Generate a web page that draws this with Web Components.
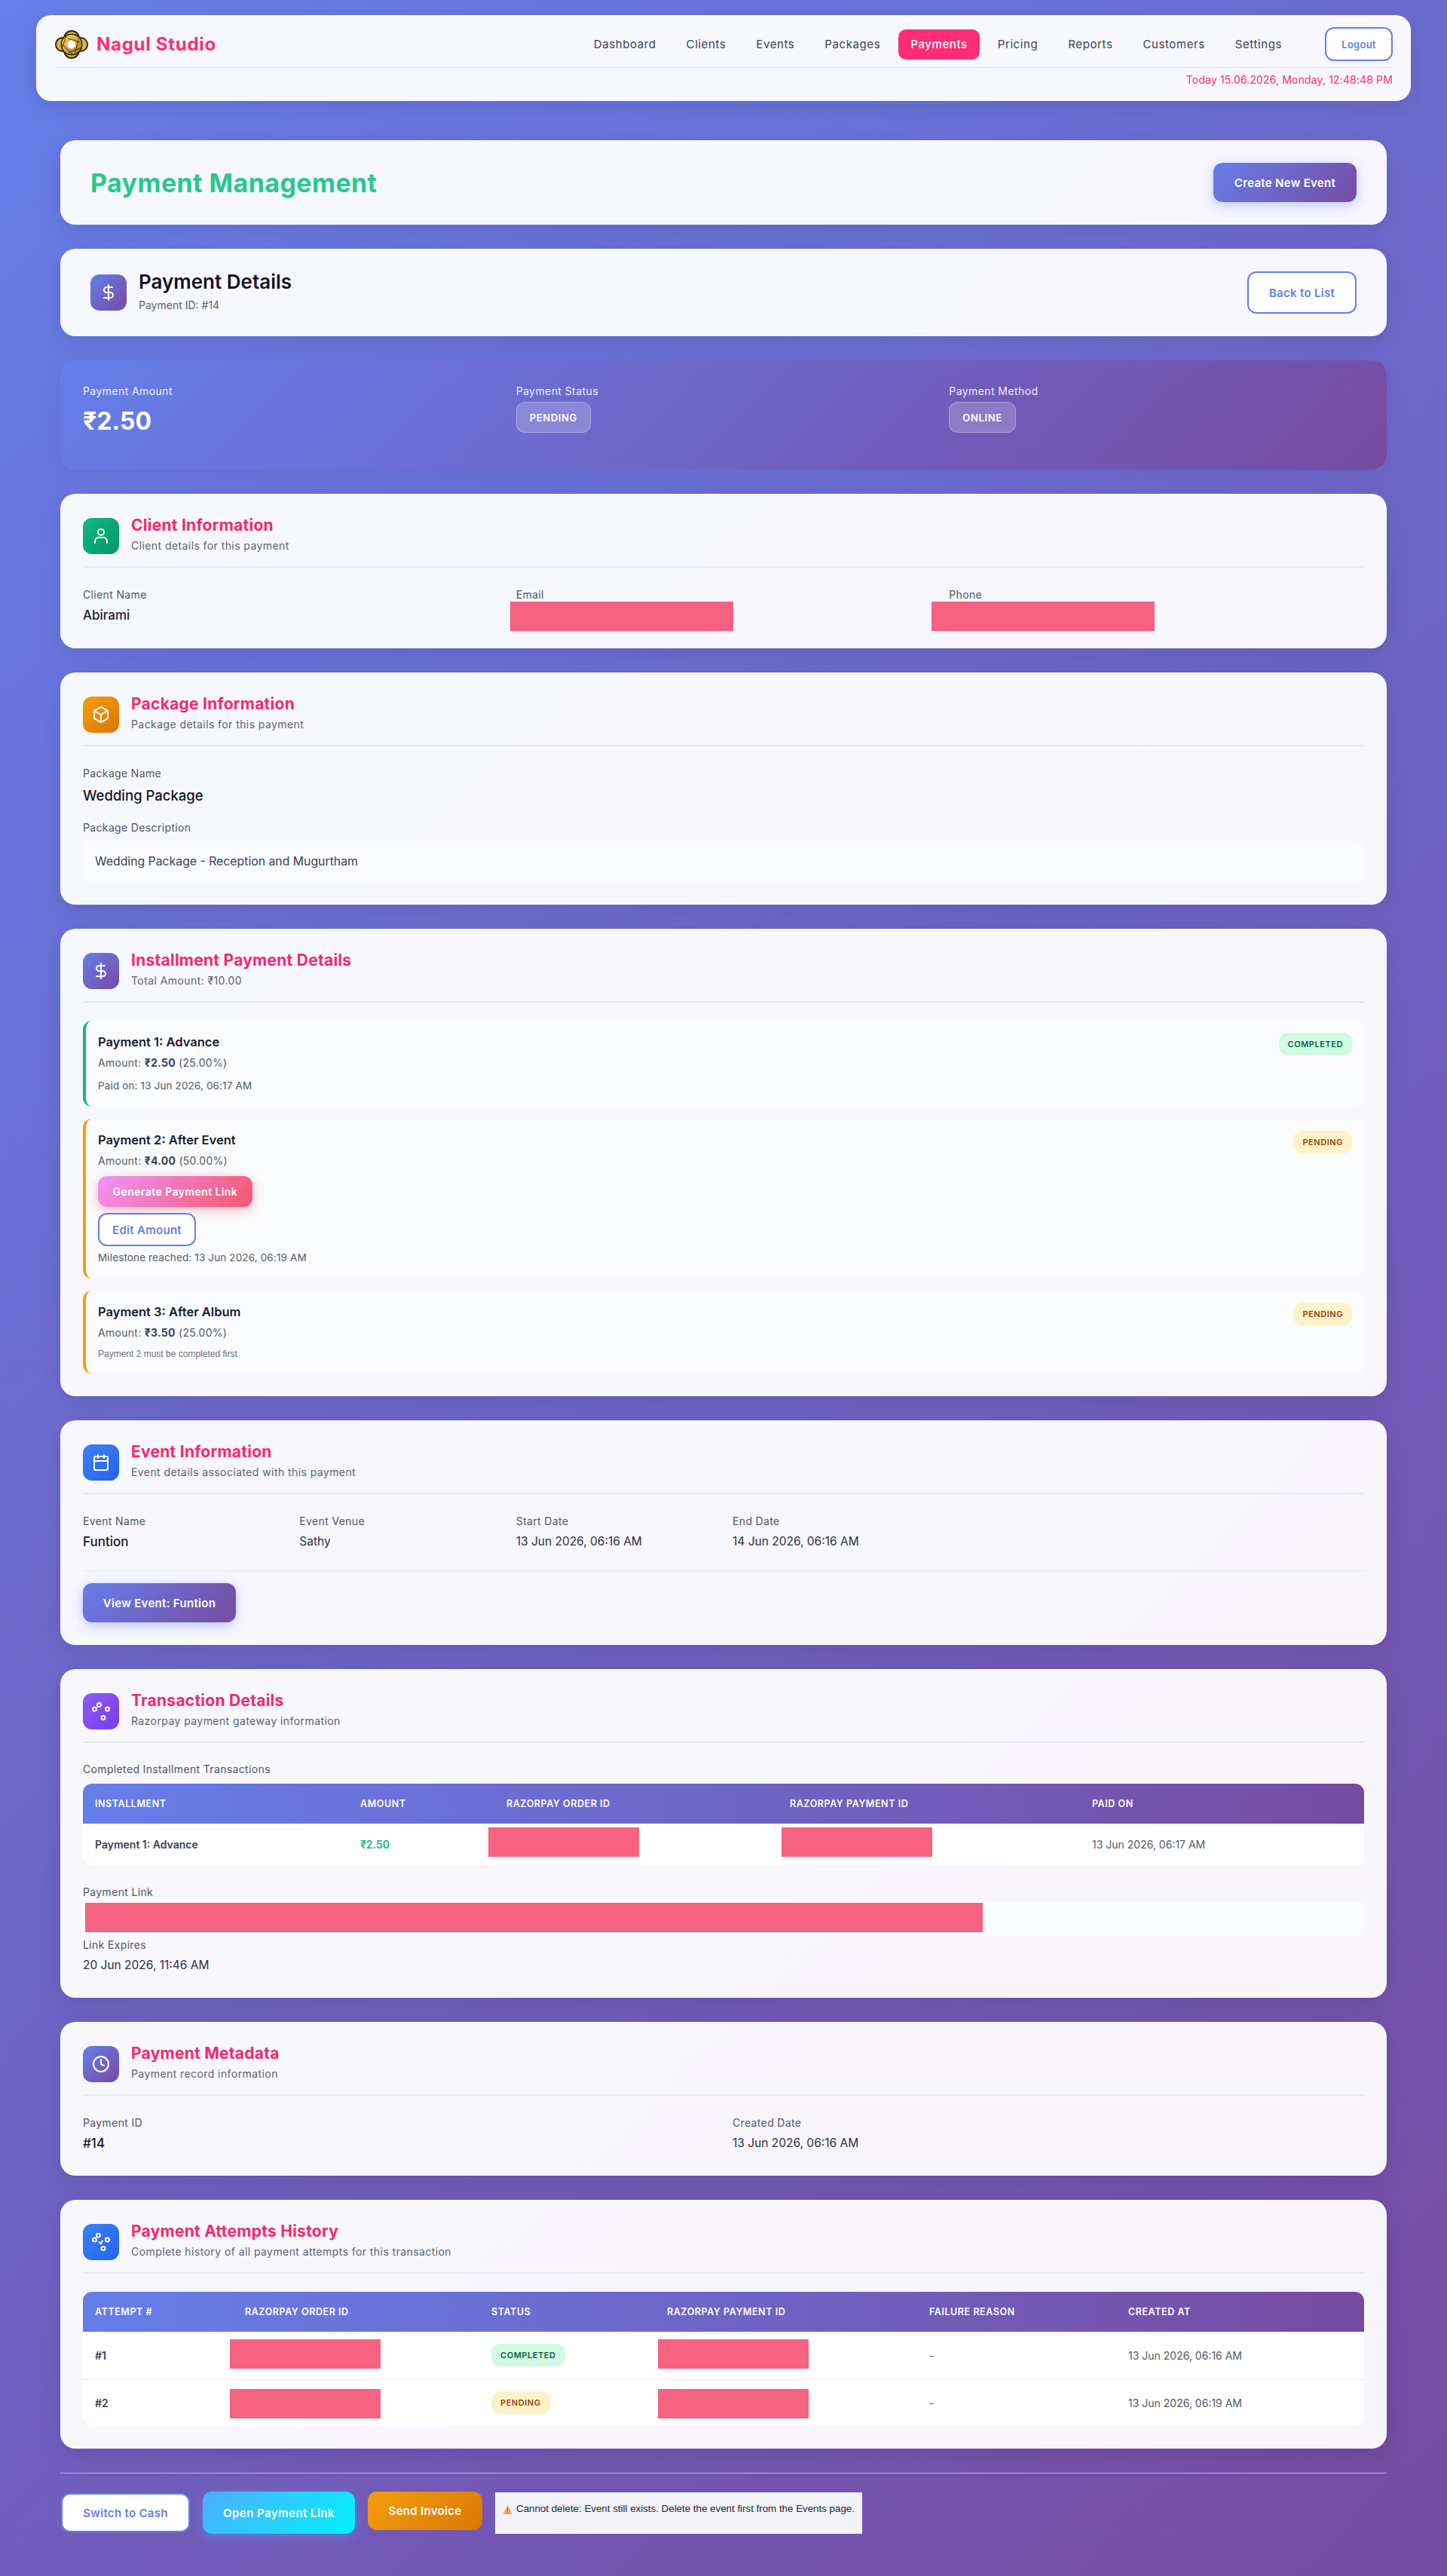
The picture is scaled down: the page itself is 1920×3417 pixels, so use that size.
<!DOCTYPE html>
<html lang="en">
<head>
<meta charset="utf-8">
<title>Payment Details - Nagul Studio</title>
<style>
    html, body { margin: 0; padding: 0; }
    body {
        min-height: 3417px;
        background: linear-gradient(135deg, #667eea 0%, #764ba2 100%);
        font-family: Inter, "Noto Sans", "Liberation Sans", sans-serif;
        color: #1a1a2e;
    }
    .stack { display: block; }
</style>
</head>
<body>
<app-navbar active="Payments"></app-navbar>
<page-shell>
    <page-title>
        Payment Management
        <app-button slot="action" variant="primary" style="width:190px;height:52px">Create New Event</app-button>
    </page-title>
    <detail-header paymentid="Payment ID: #14">Payment Details</detail-header>
    <hero-summary></hero-summary>

    <info-card icon="user" tone="green" heading="Client Information" subtitle="Client details for this payment">
        <field-grid cols="3" pad="3">
            <info-field label="Client Name">Abirami</info-field>
            <info-field label="Email"><red-act style="left:-8px;top:21px;width:296px;height:39px"></red-act></info-field>
            <info-field label="Phone"><red-act style="left:-23px;top:21px;width:296px;height:39px"></red-act></info-field>
        </field-grid>
    </info-card>

    <info-card icon="box" tone="amber" heading="Package Information" subtitle="Package details for this payment">
        <info-field label="Package Name" size="large">Wedding Package</info-field>
        <info-field label="Package Description" kind="box" style="margin-top:18px">Wedding Package - Reception and Mugurtham</info-field>
    </info-card>

    <info-card icon="dollar" tone="brand" heading="Installment Payment Details" subtitle="Total Amount: ₹10.00">
        <installment-item name="Payment 1: Advance" state="completed" amount="₹2.50" percent="(25.00%)">
            <div class="stack" style="margin-top:8px;font-size:13.5px;line-height:22px;color:#555a66;letter-spacing:.01em">Paid on: 13 Jun 2026, 06:17 AM</div>
        </installment-item>
        <installment-item name="Payment 2: After Event" state="pending" amount="₹4.00" percent="(50.00%)">
            <app-button variant="pink" style="display:flex;width:205px;height:41px;margin-top:9px">Generate Payment Link</app-button>
            <app-button variant="outline" style="display:flex;width:130px;height:44px;margin-top:8px">Edit Amount</app-button>
            <div class="stack" style="margin-top:4px;font-size:13.5px;line-height:22px;color:#555a66;letter-spacing:.01em">Milestone reached: 13 Jun 2026, 06:19 AM</div>
        </installment-item>
        <installment-item name="Payment 3: After Album" state="pending" amount="₹3.50" percent="(25.00%)">
            <div class="stack" style="margin-top:8px;font:12px/18px 'Liberation Sans',Arial,sans-serif;color:#6c7280">Payment 2 must be completed first</div>
        </installment-item>
    </info-card>

    <info-card icon="calendar" tone="blue" heading="Event Information" subtitle="Event details associated with this payment">
        <field-grid cols="6">
            <info-field label="Event Name">Funtion</info-field>
            <info-field label="Event Venue" weight="400">Sathy</info-field>
            <info-field label="Start Date" weight="400">13 Jun 2026, 06:16 AM</info-field>
            <info-field label="End Date" weight="400">14 Jun 2026, 06:16 AM</info-field>
        </field-grid>
        <event-link-row>View Event: Funtion</event-link-row>
    </info-card>

    <info-card icon="nodes" tone="violet" heading="Transaction Details" subtitle="Razorpay payment gateway information">
        <transactions-table></transactions-table>
        <info-field label="Payment Link" kind="link" style="margin-top:26px"><red-act style="left:3px;top:1px;width:1191px;height:39px"></red-act></info-field>
        <info-field label="Link Expires" weight="400" style="padding-bottom:2px"> 20 Jun 2026, 11:46 AM</info-field>
    </info-card>

    <info-card icon="clock" tone="brand" heading="Payment Metadata" subtitle="Payment record information">
        <field-grid cols="2" pad="2">
            <info-field label="Payment ID">#14</info-field>
            <info-field label="Created Date" weight="400">13 Jun 2026, 06:16 AM</info-field>
        </field-grid>
    </info-card>

    <info-card icon="nodes-check" tone="blue" heading="Payment Attempts History" subtitle="Complete history of all payment attempts for this transaction">
        <attempts-table></attempts-table>
    </info-card>

    <action-bar>
        <app-button variant="outline" style="width:171px;height:52px">Switch to Cash</app-button>
        <app-button variant="cyan" style="width:202px;height:56px">Open Payment Link</app-button>
        <app-button variant="amber" style="width:152px;height:51px;margin-bottom:5px">Send Invoice</app-button>
        <delete-notice>Cannot delete: Event still exists. Delete the event first from the Events page.</delete-notice>
    </action-bar>
</page-shell>

<script>
const fontStack = `Inter, "Noto Sans", "Liberation Sans", sans-serif`;

const iconPaths = {
    dollar: `<path d="M12 2v20M17 5H9.5a3.5 3.5 0 0 0 0 7h5a3.5 3.5 0 0 1 0 7H6"/>`,
    user: `<circle cx="12" cy="7" r="4"/><path d="M20 21v-2a5 5 0 0 0-5-5H9a5 5 0 0 0-5 5v2"/>`,
    box: `<path d="M21 8a2 2 0 0 0-1-1.73l-7-4a2 2 0 0 0-2 0l-7 4A2 2 0 0 0 3 8v8a2 2 0 0 0 1 1.73l7 4a2 2 0 0 0 2 0l7-4A2 2 0 0 0 21 16Z"/><path d="M3.3 7l8.7 5 8.7-5M12 22V12"/>`,
    calendar: `<rect x="3" y="4" width="18" height="18" rx="2"/><path d="M3 10h18M8 2v4M16 2v4"/>`,
    clock: `<circle cx="12" cy="12" r="10"/><path d="M12 6v6l4 2"/>`,
    nodes: `<circle cx="9.5" cy="3.5" r="2.5"/><circle cx="3.5" cy="9" r="2.5"/><circle cx="20.5" cy="9" r="2.5"/><circle cx="15" cy="20.5" r="2.5"/>`,
    'nodes-check': `<circle cx="8.5" cy="3" r="2.5"/><circle cx="3.5" cy="9" r="2.5"/><circle cx="20.5" cy="9" r="2.5"/><circle cx="15" cy="20.5" r="2.5"/><path d="M9.5 12l2 2.5 2.5-4"/>`
};

const tones = {
    brand: 'linear-gradient(135deg,#667eea,#764ba2)',
    green: 'linear-gradient(135deg,#10b981,#059669)',
    amber: 'linear-gradient(135deg,#f59e0b,#d97706)',
    blue: 'linear-gradient(135deg,#3b82f6,#2563eb)',
    violet: 'linear-gradient(135deg,#8b5cf6,#7c3aed)'
};

class IconTile extends HTMLElement{
    connectedCallback(){
        const shadow = this.shadowRoot || this.attachShadow({mode: 'open'});
        const tone = tones[this.getAttribute('tone')] || tones.brand;
        shadow.innerHTML = `
            <style>
                :host { display: flex; flex: none; width: 48px; height: 48px; border-radius: 12px;
                        align-items: center; justify-content: center; background: ${tone}; }
                svg { width: 24px; height: 24px; fill: none; stroke: #fff; stroke-width: 2;
                      stroke-linecap: round; stroke-linejoin: round; }
            </style>
            <svg viewBox="0 0 24 24">${iconPaths[this.getAttribute('name')] || ''}</svg>`;
    }
}
customElements.define('icon-tile', IconTile);


const navbarTemplate = document.createElement('template');
navbarTemplate.innerHTML = `
    <style>
        :host { display: block; margin: 20px 48px 0; padding: 16px 24px 18px; border-radius: 20px;
                background: rgba(255,255,255,.95); box-shadow: 0 8px 32px rgba(0,0,0,.1);
                font-family: ${fontStack}; }
        .top { display: flex; align-items: center; height: 45px; padding-bottom: 8px; border-bottom: 1px solid #e6e7ee; }
        .brand { display: flex; align-items: center; gap: 11px; margin-right: auto; padding-left: 1px;
                 font-size: 24px; font-weight: 700; color: #ff2d75; letter-spacing: .03em; }
        nav { display: flex; align-items: center; gap: 8px; margin-right: 41px; }
        a { display: flex; align-items: center; height: 40px; padding: 0 16px; border-radius: 10px;
            font-size: 15px; color: #3d4250; letter-spacing: .04em; white-space: nowrap; }
        a.on { background: #ff2d75; color: #fff; font-weight: 500; }
        .date { text-align: right; font-size: 14px; line-height: 20px; margin-top: 6px; color: #ff2d75; letter-spacing: .01em; }
    </style>
    <div class="top">
        <div class="brand">
            <svg width="44" height="38" viewBox="0 0 44 38">
                <defs><linearGradient id="gold" x1="0" y1="0" x2="1" y2="1">
                    <stop offset="0" stop-color="#f4d976"/><stop offset=".55" stop-color="#d0a235"/><stop offset="1" stop-color="#a27c22"/>
                </linearGradient></defs>
                <g fill="#e0b84a" stroke="#2a2812" stroke-width="2">
                    <circle cx="22" cy="11" r="10"/><circle cx="22" cy="27" r="10"/>
                    <circle cx="10" cy="19" r="9"/><circle cx="34" cy="19" r="9"/>
                </g>
                <circle cx="22" cy="19" r="14.5" fill="#2a2812"/>
                <circle cx="22" cy="19" r="13" fill="url(#gold)"/>
                <g stroke="#2a2812" stroke-width=".9">
                    <path d="M17 11L33 16M31 12L27 29M36 23L18 30M24 33L10 19M9 24L15 8"/>
                </g>
                <path d="M22 13l5.2 3v6L22 25l-5.2-3v-6z" fill="#fff"/>
            </svg>
            <span>Nagul Studio</span>
        </div>
        <nav></nav>
        <app-button variant="outline" style="width:90px;height:45px;font-size:13px">Logout</app-button>
    </div>
    <div class="date">Today 15.06.2026, Monday, 12:48:48 PM</div>
`;
class AppNavbar extends HTMLElement{
    constructor(){
        super();
        this.shadow = this.attachShadow({mode: 'open'});
        this.shadow.appendChild( navbarTemplate.content.cloneNode(true) );
    }
    connectedCallback(){
        const items = ['Dashboard','Clients','Events','Packages','Payments','Pricing','Reports','Customers','Settings'];
        const active = this.getAttribute('active');
        this.shadow.querySelector('nav').innerHTML = items
            .map(i => `<a class="${i === active ? 'on' : ''}">${i}</a>`).join('');
    }
}
customElements.define('app-navbar', AppNavbar);


class PageShell extends HTMLElement{
    constructor(){
        super();
        this.attachShadow({mode: 'open'}).innerHTML = `
            <style>
                :host { display: flex; flex-direction: column; gap: 32px; margin: 52px 80px 0; }
            </style>
            <slot></slot>`;
    }
}
customElements.define('page-shell', PageShell);


const buttonTemplate = document.createElement('template');
buttonTemplate.innerHTML = `
    <style>
        :host { display: inline-flex; flex: none; font-size: 15px; }
        button { width: 100%; height: 100%; padding: 0; border: 0; border-radius: 12px; cursor: pointer;
                 font-family: ${fontStack}; font-size: inherit; font-weight: 600; letter-spacing: .02em; color: #fff; white-space: nowrap; }
        :host([variant=primary]) button { background: linear-gradient(135deg,#667eea,#764ba2); box-shadow: 0 4px 15px rgba(102,126,234,.4); }
        :host([variant=outline]) button { background: #fff; color: #667eea; border: 2px solid #667eea; }
        :host([variant=pink]) button { background: linear-gradient(135deg,#f093fb,#f5576c); box-shadow: 0 4px 15px rgba(245,87,108,.4); font-size: 14px; letter-spacing: .03em; }
        :host([variant=cyan]) button { background: linear-gradient(135deg,#4facfe,#00f2fe); box-shadow: 0 4px 15px rgba(79,172,254,.4); letter-spacing: .03em; }
        :host([variant=amber]) button { background: linear-gradient(135deg,#f59e0b,#d97706); }
    </style>
    <button type="button"><slot></slot></button>
`;
class AppButton extends HTMLElement{
    constructor(){
        super();
        this.attachShadow({mode: 'open'}).appendChild( buttonTemplate.content.cloneNode(true) );
    }
}
customElements.define('app-button', AppButton);


class PageTitle extends HTMLElement{
    constructor(){
        super();
        this.attachShadow({mode: 'open'}).innerHTML = `
            <style>
                :host { display: flex; align-items: center; justify-content: space-between; height: 112px;
                        padding: 0 40px; box-sizing: border-box; border-radius: 20px;
                        background: rgba(255,255,255,.95); box-shadow: 0 8px 32px rgba(0,0,0,.1); font-family: ${fontStack};
                        font-size: 34px; font-weight: 700; color: #27c98a; letter-spacing: .012em; }
            </style>
            <span><slot></slot></span>
            <slot name="action"></slot>`;
    }
}
customElements.define('page-title', PageTitle);


class DetailHeader extends HTMLElement{
    constructor(){
        super();
        this.shadow = this.attachShadow({mode: 'open'});
    }
    connectedCallback(){
        this.shadow.innerHTML = `
            <style>
                :host { display: flex; align-items: center; height: 116px; padding: 0 40px; box-sizing: border-box;
                        border-radius: 20px; background: rgba(255,255,255,.95); box-shadow: 0 8px 32px rgba(0,0,0,.1);
                        font-family: ${fontStack}; }
                .text { margin-left: 16px; margin-right: auto; padding-bottom: 6px; }
                .head { font-size: 26px; line-height: 36px; font-weight: 600; color: #14141f; }
                .sub { font-size: 14px; line-height: 20px; margin-top: 3px; color: #5c6170; }
            </style>
            <icon-tile name="dollar" tone="brand"></icon-tile>
            <div class="text">
                <div class="head"><slot></slot></div>
                <div class="sub">${this.getAttribute('paymentid')}</div>
            </div>
            <app-button variant="outline" style="width:145px;height:56px">Back to List</app-button>`;
    }
}
customElements.define('detail-header', DetailHeader);


class HeroSummary extends HTMLElement{
    constructor(){
        super();
        this.attachShadow({mode: 'open'}).innerHTML = `
            <style>
                :host { display: grid; grid-template-columns: repeat(3,1fr); gap: 24px; height: 145px; padding: 30px;
                        box-sizing: border-box; border-radius: 20px; color: #fff; font-family: ${fontStack};
                        background: linear-gradient(135deg,#667eea,#764ba2); box-shadow: 0 8px 32px rgba(0,0,0,.06); }
                .lab { font-size: 14px; line-height: 20px; margin-top: 1px; color: rgba(255,255,255,.9); letter-spacing: .03em; }
                .amt { font-size: 32px; line-height: 44px; margin-top: 8px; font-weight: 700; }
                .pill { display: inline-flex; align-items: center; height: 41px; padding: 0 17px; margin-top: 4px;
                        box-sizing: border-box; border-radius: 12px; font-size: 13px; font-weight: 600; letter-spacing: .05em;
                        background: rgba(255,255,255,.2); border: 1px solid rgba(255,255,255,.3); }
            </style>
            <div><div class="lab">Payment Amount</div><div class="amt">₹2.50</div></div>
            <div><div class="lab">Payment Status</div><div class="pill">PENDING</div></div>
            <div><div class="lab">Payment Method</div><div class="pill">ONLINE</div></div>`;
    }
}
customElements.define('hero-summary', HeroSummary);


class InfoCard extends HTMLElement{
    constructor(){
        super();
        this.shadow = this.attachShadow({mode: 'open'});
    }
    connectedCallback(){
        this.shadow.innerHTML = `
            <style>
                :host { display: block; padding: 32px 30px 30px; border-radius: 20px; background: rgba(255,255,255,.95);
                        box-shadow: 0 8px 32px rgba(0,0,0,.1); font-family: ${fontStack}; }
                header { display: flex; gap: 16px; height: 48px; padding-bottom: 16px; margin-bottom: 24px;
                         border-bottom: 2px solid #e6e8ef; }
                .text { margin-top: -4px; }
                h3 { margin: 0; font-size: 21px; line-height: 28px; font-weight: 700; color: #f8266f; letter-spacing: .012em; }
                p { margin: 3px 0 0; font-size: 14px; line-height: 20px; color: #5c6170; letter-spacing: .03em; }
                .body { display: flex; flex-direction: column; }
            </style>
            <header>
                <icon-tile name="${this.getAttribute('icon')}" tone="${this.getAttribute('tone')}"></icon-tile>
                <div class="text">
                    <h3>${this.getAttribute('heading')}</h3>
                    <p>${this.getAttribute('subtitle')}</p>
                </div>
            </header>
            <div class="body"><slot></slot></div>`;
    }
}
customElements.define('info-card', InfoCard);


class FieldGrid extends HTMLElement{
    constructor(){
        super();
        this.shadow = this.attachShadow({mode: 'open'});
    }
    connectedCallback(){
        const cols = this.getAttribute('cols');
        const pad = this.getAttribute('pad') || 0;
        this.shadow.innerHTML = `
            <style>
                :host { display: grid; grid-template-columns: repeat(${cols},1fr); gap: 24px; padding-bottom: ${pad}px; }
            </style>
            <slot></slot>`;
    }
}
customElements.define('field-grid', FieldGrid);


class InfoField extends HTMLElement{
    constructor(){
        super();
        this.shadow = this.attachShadow({mode: 'open'});
    }
    connectedCallback(){
        this.shadow.innerHTML = `
            <style>
                :host { display: block; position: relative; padding-top: 2px; }
                .lab { font-size: 14px; line-height: 20px; color: #50545f; letter-spacing: .025em; }
                .val { font-size: 17px; line-height: 22px; margin-top: 6px; font-weight: 500; color: #1a1a2e; }
                :host([weight="400"]) .val { font-size: 15.5px; font-weight: 400; color: #2d3040; }
                :host([size=large]) .val { font-size: 18.5px; line-height: 26px; color: #14141f; }
                :host([kind=box]) .val { margin-top: 8px; height: 54px; display: flex; align-items: center; padding: 0 16px;
                                         font-size: 15.8px; font-weight: 400; color: #3c4150; background: #fafbfd; border-radius: 8px; }
                :host([kind=link]) { padding-top: 0; }
                :host([kind=link]) .val { margin-top: 3px; height: 45px; background: #fafbfd; border-radius: 8px; position: relative; }
            </style>
            <div class="lab">${this.getAttribute('label')}</div>
            <div class="val"><slot></slot></div>`;
    }
}
customElements.define('info-field', InfoField);


class RedAct extends HTMLElement{
    constructor(){
        super();
        this.attachShadow({mode: 'open'}).innerHTML = `
            <style>
                :host { display: block; position: absolute; background: #f56282; }
            </style>`;
    }
}
customElements.define('red-act', RedAct);


class StatusBadge extends HTMLElement{
    constructor(){
        super();
        this.attachShadow({mode: 'open'}).innerHTML = `
            <style>
                :host { display: inline-flex; align-items: center; height: 30px; padding: 0 12px; box-sizing: border-box;
                        border-radius: 12px; font-size: 11px; font-weight: 600; letter-spacing: .05em; text-transform: uppercase; }
                :host([state=completed]) { background: #d1fae5; color: #065f46; }
                :host([state=pending]) { background: #fef3c7; color: #92400e; }
            </style>
            <slot></slot>`;
    }
}
customElements.define('status-badge', StatusBadge);


class InstallmentItem extends HTMLElement{
    constructor(){
        super();
        this.shadow = this.attachShadow({mode: 'open'});
    }
    connectedCallback(){
        const state = this.getAttribute('state');
        this.shadow.innerHTML = `
            <style>
                :host { display: flex; align-items: flex-start; justify-content: space-between; margin-bottom: 16px;
                        padding: 16px 16px 17px; background: #fafbfd; border-radius: 12px;
                        border-left: 4px solid ${state === 'completed' ? '#10b981' : '#f59e0b'}; }
                :host(:last-child) { margin-bottom: 0; }
                .name { font-size: 16.5px; line-height: 24px; font-weight: 600; color: #1a1a2e; }
                .amt { font-size: 14px; line-height: 22px; margin-top: 5px; color: #555a66; letter-spacing: .02em; }
                b { font-weight: 700; color: #3c4150; }
            </style>
            <div>
                <div class="name">${this.getAttribute('name')}</div>
                <div class="amt">Amount: <b>${this.getAttribute('amount')}</b> ${this.getAttribute('percent')}</div>
                <slot></slot>
            </div>
            <status-badge state="${state}">${state}</status-badge>`;
    }
}
customElements.define('installment-item', InstallmentItem);


class EventLinkRow extends HTMLElement{
    constructor(){
        super();
        this.attachShadow({mode: 'open'}).innerHTML = `
            <style>
                :host { display: block; margin-top: 27px; padding-top: 16px; border-top: 1px solid #e8e9f0; }
            </style>
            <app-button variant="primary" style="width:203px;height:52px"><slot></slot></app-button>`;
    }
}
customElements.define('event-link-row', EventLinkRow);


const tableStyles = `
    :host { display: block; font-family: ${fontStack}; }
    .cap { font-size: 14px; line-height: 20px; margin: 1px 0 9px; color: #50545f; letter-spacing: .025em; }
    table { width: 100%; border-collapse: separate; border-spacing: 0; table-layout: fixed; background: #fff; border-radius: 12px; }
    thead tr { background: linear-gradient(90deg,#667eea,#764ba2); }
    tr { background: transparent; }
    th { height: 53px; padding: 0 16px; text-align: left; color: #fff; font-size: 12.5px; font-weight: 600;
         letter-spacing: .045em; text-transform: uppercase; box-sizing: border-box; }
    th:first-child { border-top-left-radius: 12px; }
    th:last-child { border-top-right-radius: 12px; }
    td { position: relative; padding: 0 16px; font-size: 14px; color: #555a66; box-sizing: border-box; }
    td.name { font-weight: 600; color: #3c4150; }
    td.money { font-weight: 600; color: #10b981; }
    tbody tr + tr td { border-top: 1px solid #e6e8ef; }
`;

class TransactionsTable extends HTMLElement{
    constructor(){
        super();
        this.attachShadow({mode: 'open'}).innerHTML = `
            <style>${tableStyles} td { height: 55px; }</style>
            <div class="cap">Completed Installment Transactions</div>
            <table>
                <colgroup><col style="width:352px"><col style="width:194px"><col style="width:376px"><col style="width:401px"><col></colgroup>
                <thead><tr><th>Installment</th><th>Amount</th><th>Razorpay Order ID</th><th>Razorpay Payment ID</th><th>Paid On</th></tr></thead>
                <tbody><tr>
                    <td class="name">Payment 1: Advance</td>
                    <td class="money">₹2.50</td>
                    <td><red-act style="left:-8px;top:5px;width:200px;height:39px"></red-act></td>
                    <td><red-act style="left:5px;top:5px;width:200px;height:39px"></red-act></td>
                    <td>13 Jun 2026, 06:17 AM</td>
                </tr></tbody>
            </table>`;
    }
}
customElements.define('transactions-table', TransactionsTable);


class AttemptsTable extends HTMLElement{
    constructor(){
        super();
        this.attachShadow({mode: 'open'}).innerHTML = `
            <style>${tableStyles}
                tbody tr:first-child td { height: 63px; }
                tbody tr:last-child td { height: 62px; }
                status-badge { transform: translateY(-1px); }
            </style>
            <table>
                <colgroup><col style="width:199px"><col style="width:327px"><col style="width:233px"><col style="width:348px"><col style="width:264px"><col></colgroup>
                <thead><tr><th>Attempt #</th><th>Razorpay Order ID</th><th>Status</th><th>Razorpay Payment ID</th><th>Failure Reason</th><th>Created At</th></tr></thead>
                <tbody>
                    <tr>
                        <td class="name">#1</td>
                        <td><red-act style="left:-4px;top:10px;width:200px;height:39px"></red-act></td>
                        <td><status-badge state="completed">completed</status-badge></td>
                        <td><red-act style="left:4px;top:10px;width:200px;height:39px"></red-act></td>
                        <td>-</td>
                        <td>13 Jun 2026, 06:16 AM</td>
                    </tr>
                    <tr>
                        <td class="name">#2</td>
                        <td><red-act style="left:-4px;top:12px;width:200px;height:39px"></red-act></td>
                        <td><status-badge state="pending">pending</status-badge></td>
                        <td><red-act style="left:4px;top:12px;width:200px;height:39px"></red-act></td>
                        <td>-</td>
                        <td>13 Jun 2026, 06:19 AM</td>
                    </tr>
                </tbody>
            </table>`;
    }
}
customElements.define('attempts-table', AttemptsTable);


class ActionBar extends HTMLElement{
    constructor(){
        super();
        this.attachShadow({mode: 'open'}).innerHTML = `
            <style>
                :host { display: flex; align-items: center; gap: 17px; padding: 24px 0 0 1px;
                        border-top: 1px solid rgba(255,255,255,.55); }
            </style>
            <slot></slot>`;
    }
}
customElements.define('action-bar', ActionBar);


class DeleteNotice extends HTMLElement{
    constructor(){
        super();
        this.attachShadow({mode: 'open'}).innerHTML = `
            <style>
                :host { display: flex; align-items: flex-start; gap: 5px; width: 487px; height: 55px; padding: 14px 0 0 10px;
                        box-sizing: border-box; background: #f3f3f7; font: 13.33px/16px "Liberation Sans", Arial, sans-serif; color: #23232f; }
                svg { flex: none; margin-top: 2px; }
            </style>
            <svg width="13" height="14" viewBox="0 0 13 14"><path d="M6.5 1L12.6 13H.4z" fill="#f2a65a"/><path d="M6.5 5v4.5M6.5 10.8v1" stroke="#8a5a20" stroke-width="1"/></svg>
            <span><slot></slot></span>`;
    }
}
customElements.define('delete-notice', DeleteNotice);
</script>
</body>
</html>
